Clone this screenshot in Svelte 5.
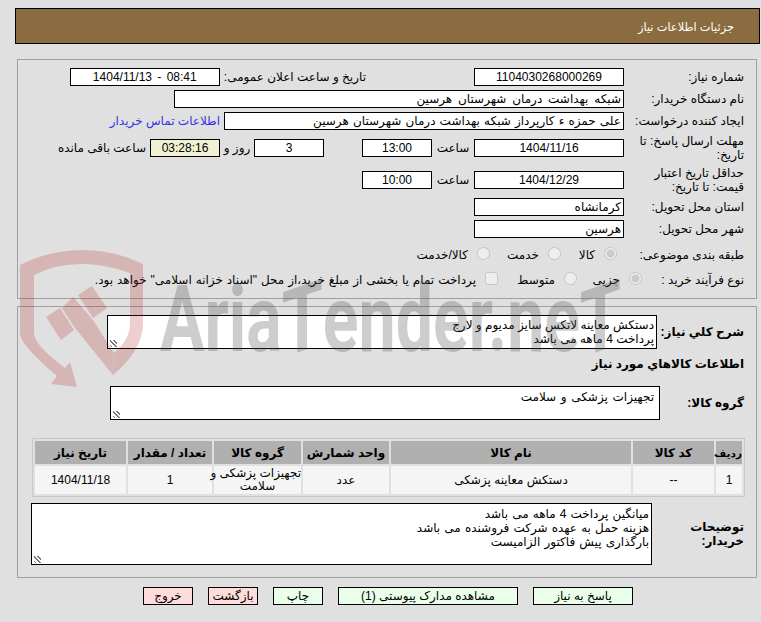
<script>
  const items = [
    { row: '1', code: '--', name: 'دستکش معاینه پزشکی', unit: 'عدد', group: ['تجهیزات پزشکی و', 'سلامت'], qty: '1', date: '1404/11/18' }
  ];
</script>

<div class="page">
  <div class="header">جزئیات اطلاعات نیاز</div>

  <section class="box top">
    <div class="row">
      <span class="label">شماره نیاز:</span>
      <div class="field center w150">1104030268000269</div>
      <span class="label second">تاریخ و ساعت اعلان عمومی:</span>
      <div class="field center w150 ltr">1404/11/13 - 08:41</div>
    </div>
    <div class="row">
      <span class="label">نام دستگاه خریدار:</span>
      <div class="field buyer">شبکه بهداشت درمان شهرستان هرسین</div>
    </div>
    <div class="row">
      <span class="label">ایجاد کننده درخواست:</span>
      <div class="field creator">علی حمزه ء کارپرداز شبکه بهداشت درمان شهرستان هرسین</div>
      <span class="contact">اطلاعات تماس خریدار</span>
    </div>
    <div class="row tall deadline">
      <span class="label">مهلت ارسال پاسخ: تا تاریخ:</span>
      <div class="field center w150">1404/11/16</div>
      <span class="time-label">ساعت</span>
      <div class="field center w70">13:00</div>
      <div class="field center w70 days">3</div>
      <span class="day-label">روز و</span>
      <div class="field center w70 clock">03:28:16</div>
      <span class="left-label">ساعت باقی مانده</span>
    </div>
    <div class="row tall">
      <span class="label">حداقل تاریخ اعتبار قیمت: تا تاریخ:</span>
      <div class="field center w150">1404/12/29</div>
      <span class="time-label">ساعت</span>
      <div class="field center w70">10:00</div>
    </div>
    <div class="row after-tall">
      <span class="label">استان محل تحویل:</span>
      <div class="field w150">کرمانشاه</div>
    </div>
    <div class="row">
      <span class="label">شهر محل تحویل:</span>
      <div class="field w150">هرسین</div>
    </div>
    <div class="row options">
      <span class="label">طبقه بندی موضوعی:</span>
      <label class="opt kala"><input type="radio" name="cat" checked disabled />کالا</label>
      <label class="opt khedmat"><input type="radio" name="cat" disabled />خدمت</label>
      <label class="opt"><input type="radio" name="cat" disabled />کالا/خدمت</label>
    </div>
    <div class="row options">
      <span class="label short">نوع فرآیند خرید :</span>
      <label class="opt jozi"><input type="radio" name="proc" checked disabled />جزیی</label>
      <label class="opt motavaset"><input type="radio" name="proc" disabled />متوسط</label>
      <label class="opt payment"><input type="checkbox" disabled />پرداخت تمام یا بخشی از مبلغ خرید،از محل "اسناد خزانه اسلامی" خواهد بود.</label>
    </div>
  </section>

  <section class="box bottom">
    <div class="row desc">
      <span class="label bold">شرح کلي نیاز:</span>
      <div class="area desc-area">دستکش معاینه لاتکس سایز مدیوم و لارج
پرداخت 4 ماهه می باشد</div>
    </div>
    <div class="goods-title">اطلاعات کالاهاي مورد نیاز</div>
    <div class="row group">
      <span class="label bold">گروه کالا:</span>
      <div class="area group-area">تجهیزات پزشکی و سلامت</div>
    </div>

    <table>
      <thead>
        <tr>
          <th class="c-row">ردیف</th>
          <th class="c-code">کد کالا</th>
          <th class="c-name">نام کالا</th>
          <th class="c-unit">واحد شمارش</th>
          <th class="c-group">گروه کالا</th>
          <th class="c-qty">تعداد / مقدار</th>
          <th class="c-date">تاریخ نیاز</th>
        </tr>
      </thead>
      <tbody>
        {#each items as item}
          <tr>
            <td>{item.row}</td>
            <td>{item.code}</td>
            <td>{item.name}</td>
            <td>{item.unit}</td>
            <td class="tight">{item.group[0]}<br />{item.group[1]}</td>
            <td>{item.qty}</td>
            <td>{item.date}</td>
          </tr>
        {/each}
      </tbody>
    </table>

    <div class="row comments">
      <span class="label bold">توضیحات خریدار:</span>
      <div class="area comments-area">میانگین پرداخت 4 ماهه می باشد
هزینه حمل به عهده شرکت فروشنده می باشد
 بارگذاری پیش فاکتور الزامیست</div>
    </div>
  </section>

  <div class="buttons">
    <button class="green wide">پاسخ به نیاز</button>
    <button class="green docs">مشاهده مدارک پیوستی (1)</button>
    <button class="green">چاپ</button>
    <button class="red">بازگشت</button>
    <button class="red">خروج</button>
  </div>

  <!-- watermark sits over the form -->
  <div class="mark" aria-hidden="true">
    <svg class="shield" viewBox="0 0 200 170" width="200" height="170">
      <path fill="#b01010" d="M10 25 Q40 10 72 10 Q105 10 133 24 L133 83 Q133 110 103 135 L104 113 Q120 100 120 83 L120 33 Q95 24 72 24 Q45 24 24 35 L24 93 Q24 105 55 128 L60 122 L67 147 L41 144 L47 136 Q10 105 10 93 Z" />
      <path fill="#b01010" d="M52 68 L63 57 L83 80 L104 113 L103 135 L65 88 Z M36 77 L50 68 L64 90 L51 100 Z M68 55 L82 46 L97 68 L83 78 Z" />
    </svg>
    <span class="mark-text">Aria<span class="slant">T</span>ender.ne<span class="slant">T</span></span>
  </div>
</div>

<style>
  :global(body) {
    margin: 0;
    background: #e0e0e0;
  }
  .page {
    position: relative;
    width: 761px;
    height: 622px;
    overflow: hidden;
    padding-top: 8px;
    box-sizing: border-box;
    direction: rtl;
    font-family: "Liberation Sans", "DejaVu Sans", sans-serif;
    font-size: 12px;
    line-height: 14px;
    color: #000;
  }
  .header {
    box-sizing: border-box;
    height: 36px;
    margin: 0 1px 0 15px;
    padding: 0 25px;
    font-size: 11.4px;
    line-height: 36px;
    background: #8b6c40;
    border: 1px solid #000;
    color: #fff;
  }
  .box {
    box-sizing: border-box;
    margin-left: 17px;
    margin-right: 4px;
    border: 1px solid #a0a0a0;
    padding-right: 12px;
  }
  .top {
    height: 240px;
    margin-top: 15px;
    padding-top: 8px;
  }
  .bottom {
    height: 272px;
    margin-top: 7px;
    padding-top: 8px;
  }
  .row {
    display: flex;
    align-items: center;
    min-height: 18px;
    margin-bottom: 4px;
  }
  .row.tall {
    height: 32px;
    margin-bottom: 0;
  }
  .deadline {
    margin-top: -2px;
  }
  .after-tall {
    margin-top: 2px;
  }
  .label {
    width: 120px;
    flex: none;
    box-sizing: border-box;
    padding-left: 2px;
  }
  .bold {
    font-weight: bold;
  }
  .second {
    width: auto;
    margin-right: 108px;
    margin-left: 4px;
    padding-left: 0;
  }
  .field {
    box-sizing: border-box;
    height: 18px;
    flex: none;
    padding: 0 2px;
    border: 1px solid #000;
    background: #fff;
    line-height: 17px;
    white-space: nowrap;
    overflow: hidden;
  }
  .center {
    text-align: center;
  }
  .ltr {
    direction: ltr;
    word-spacing: 2px;
  }
  .w150 {
    width: 150px;
  }
  .w70 {
    width: 70px;
  }
  .buyer {
    width: 450px;
    word-spacing: 2.5px;
  }
  .creator {
    width: 400px;
    word-spacing: 0.8px;
  }
  .contact {
    margin-right: 4px;
    color: #3333e6;
  }
  .time-label {
    width: 42px;
    text-align: center;
    flex: none;
  }
  .days {
    margin-right: 38px;
  }
  .day-label {
    width: 34px;
    flex: none;
    text-align: center;
    white-space: nowrap;
  }
  .clock {
    background: #f0f0d2;
  }
  .left-label {
    margin-right: 4px;
  }
  .options {
    height: 25px;
    margin: 0;
  }
  .opt {
    display: flex;
    align-items: center;
    white-space: nowrap;
  }
  .opt input {
    width: 13px;
    height: 13px;
    margin: 0 0 3px 9px;
  }
  .short {
    width: 102px;
  }
  .kala {
    width: 56px;
    margin-right: 7px;
  }
  .khedmat {
    width: 71px;
  }
  .jozi {
    width: 65px;
  }
  .motavaset {
    width: 79px;
  }
  .payment {
    word-spacing: 0.6px;
  }
  .area {
    box-sizing: border-box;
    flex: none;
    padding: 2px 2px 1px;
    border: 1px solid #000;
    background: #fff;
    white-space: pre-line;
    line-height: 14px;
    position: relative;
  }
  .area::after {
    content: "";
    position: absolute;
    left: 2px;
    bottom: 1px;
    width: 7px;
    height: 7px;
    background: repeating-linear-gradient(45deg, transparent 0 1px, #777 1px 2px, transparent 2px 3px);
  }
  .desc {
    margin: 0;
  }
  .desc .label {
    width: 87px;
  }
  .desc-area {
    width: 550px;
    height: 34px;
  }
  .goods-title {
    margin-top: 8px;
    font-weight: bold;
    height: 29px;
    line-height: 14px;
  }
  .group {
    margin: 0 0 18px;
  }
  .group .label {
    width: 84px;
  }
  .group-area {
    width: 550px;
    height: 34px;
    padding: 3px 5px 0;
    word-spacing: 1.3px;
  }
  table {
    box-sizing: border-box;
    width: 713px;
    height: 59px;
    margin: 0 -1px 0 0;
    border: 1px solid #c8c8c8;
    border-collapse: separate;
    border-spacing: 2px;
    table-layout: fixed;
    text-align: center;
  }
  th {
    height: 23px;
    padding: 0;
    background: #b0b0b0;
    font-weight: bold;
  }
  td {
    padding: 0;
    background: #f5f5f5;
  }
  .tight {
    white-space: nowrap;
    line-height: 13px;
  }
  .c-row { width: 26px; font-size: 10.5px; }
  .c-code { width: 81px; }
  .c-name { width: 240px; }
  .c-unit { width: 86px; }
  .c-group { width: 87px; }
  .c-qty { width: 84px; }
  .comments {
    margin: 6px 0 0;
  }
  .comments .label {
    width: 92px;
  }
  .comments-area {
    width: 621px;
    height: 62px;
    padding-top: 3px;
    word-spacing: 0.8px;
  }
  .buttons {
    display: flex;
    gap: 15px;
    margin: 9px 128px 0 0;
  }
  button {
    box-sizing: border-box;
    width: 50px;
    height: 18px;
    padding: 0;
    border: 1px solid #000;
    font: inherit;
    color: #000;
  }
  .green {
    background: #eaffea;
  }
  .red {
    background: #ffdcdc;
  }
  .wide {
    width: 100px;
  }
  .docs {
    width: 180px;
  }
  .mark {
    position: absolute;
    inset: 0;
    pointer-events: none;
    direction: ltr;
  }
  .shield {
    position: absolute;
    left: 10px;
    top: 240px;
    opacity: 0.2;
  }
  .mark-text {
    position: absolute;
    left: 160px;
    top: 270px;
    font-family: "Roboto", sans-serif;
    font-weight: 700;
    font-size: 92px;
    line-height: 100px;
    color: #505050;
    opacity: 0.28;
    white-space: nowrap;
    transform: scaleX(0.72);
    transform-origin: left center;
  }
  .slant {
    display: inline-block;
    transform: skewY(-14deg);
    transform-origin: center bottom;
  }
</style>
